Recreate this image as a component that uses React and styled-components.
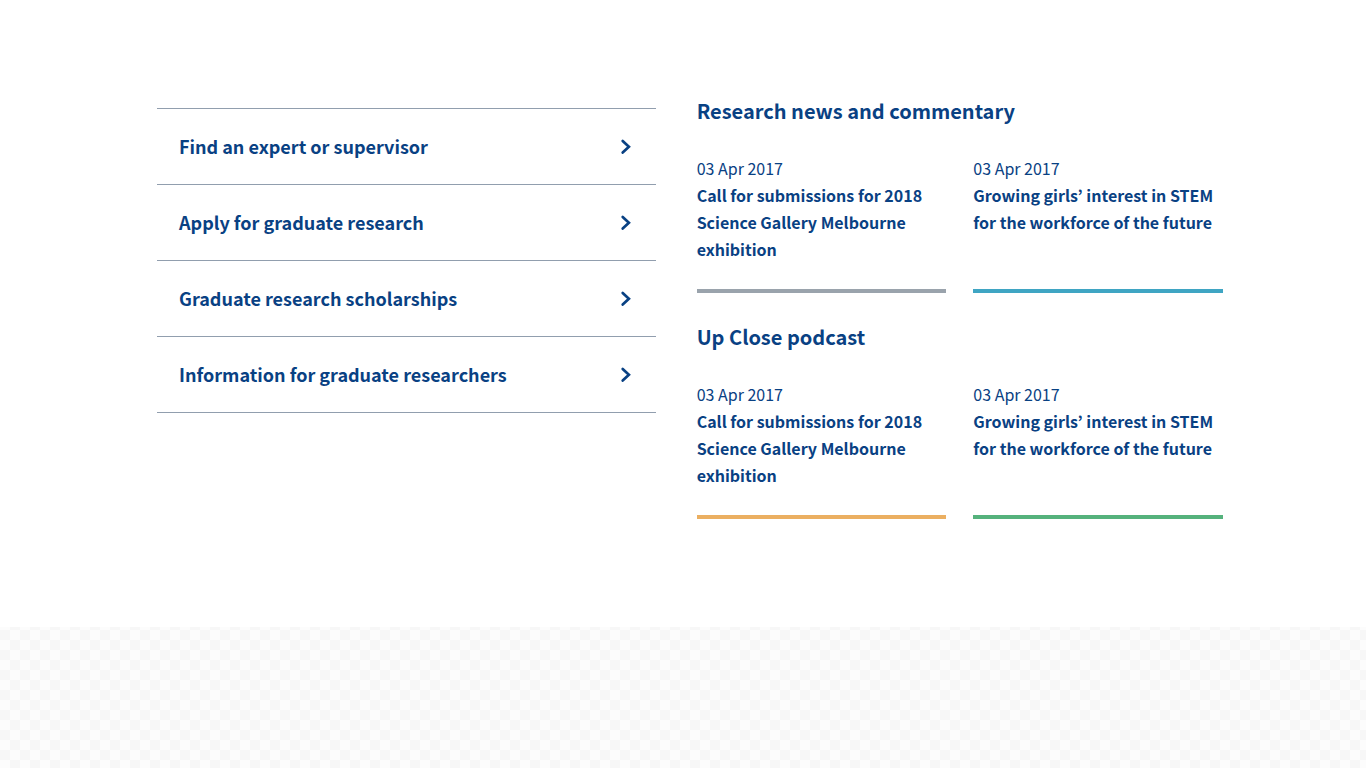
import React from "react";
import styled, { createGlobalStyle } from "styled-components";

const GlobalStyle = createGlobalStyle`
  *, *::before, *::after { box-sizing: border-box; }
  html { min-height: 100%; }
  body {
    margin: 0;
    color: #094183;
    font-family: "Source Sans Pro", "Noto Sans CJK KR", "Noto Sans", sans-serif;
    background: repeating-conic-gradient(#f7f7f7 0% 25%, #fcfcfc 0% 50%) 0 0 / 20px 20px;
  }
  a { color: inherit; text-decoration: none; }
  a:hover { text-decoration: underline; }
`;

const Section = styled.main`
  background: #fff;
  padding: 95px 24px 108px;
`;

const Container = styled.div`
  max-width: 1080px;
  margin: 0 auto;
  padding-left: 14px;
  display: grid;
  grid-template-columns: 18fr 19fr;
  column-gap: 41px;
  align-items: start;

  @media (max-width: 800px) {
    grid-template-columns: 1fr;
    row-gap: 40px;
  }
`;

const LinkList = styled.ul`
  list-style: none;
  margin: 13px 0 0;
  padding: 0;
  border-top: 1px solid #919eae;
`;

const LinkItem = styled.li`
  border-bottom: 1px solid #919eae;
`;

const ListLink = styled.a`
  display: flex;
  align-items: center;
  justify-content: space-between;
  padding: 24px 24px 24px 22px;
  font-size: 18px;
  line-height: 27px;
  font-weight: 700;
`;

const Chevron = styled.svg`
  width: 12px;
  height: 16px;
  flex: none;
  fill: none;
  stroke: currentColor;
  stroke-width: 2.7;
  stroke-linecap: round;
`;

const News = styled.div`
  display: grid;
  row-gap: 28px;
`;

const Heading = styled.h2`
  margin: 0 0 28px;
  font-size: 20px;
  line-height: 32px;
  font-weight: 700;
`;

const Cards = styled.div`
  display: grid;
  grid-template-columns: 1fr 1fr;
  column-gap: 27px;
`;

const Card = styled.a`
  display: block;
  padding-bottom: 26px;
  border-bottom: 4px solid ${(p) => p.$accent};
  font-size: 16px;
  line-height: 27px;
`;

const CardDate = styled.time`
  display: block;
`;

const CardTitle = styled.strong`
  display: block;
  font-weight: 700;
`;

const links = [
  "Find an expert or supervisor",
  "Apply for graduate research",
  "Graduate research scholarships",
  "Information for graduate researchers",
];

const titles = [
  "Call for submissions for 2018 Science Gallery Melbourne exhibition",
  "Growing girls’ interest in STEM for the workforce of the future",
];

const groups = [
  { heading: "Research news and commentary", accents: ["#9aa3ac", "#3fa5c3"] },
  { heading: "Up Close podcast", accents: ["#ebaf61", "#55b27c"] },
];

export default function App() {
  return (
    <>
      <GlobalStyle />
      <Section>
        <Container>
          <LinkList>
            {links.map((label) => (
              <LinkItem key={label}>
                <ListLink href="#">
                  {label}
                  <Chevron viewBox="0 0 12 16" aria-hidden="true">
                    <path d="M2.7 2 8.9 7.8 2.7 13.6" />
                  </Chevron>
                </ListLink>
              </LinkItem>
            ))}
          </LinkList>
          <News>
            {groups.map(({ heading, accents }) => (
              <section key={heading}>
                <Heading>{heading}</Heading>
                <Cards>
                  {titles.map((title, i) => (
                    <Card key={title} href="#" $accent={accents[i]}>
                      <CardDate dateTime="2017-04-03">03 Apr 2017</CardDate>
                      <CardTitle>{title}</CardTitle>
                    </Card>
                  ))}
                </Cards>
              </section>
            ))}
          </News>
        </Container>
      </Section>
    </>
  );
}
